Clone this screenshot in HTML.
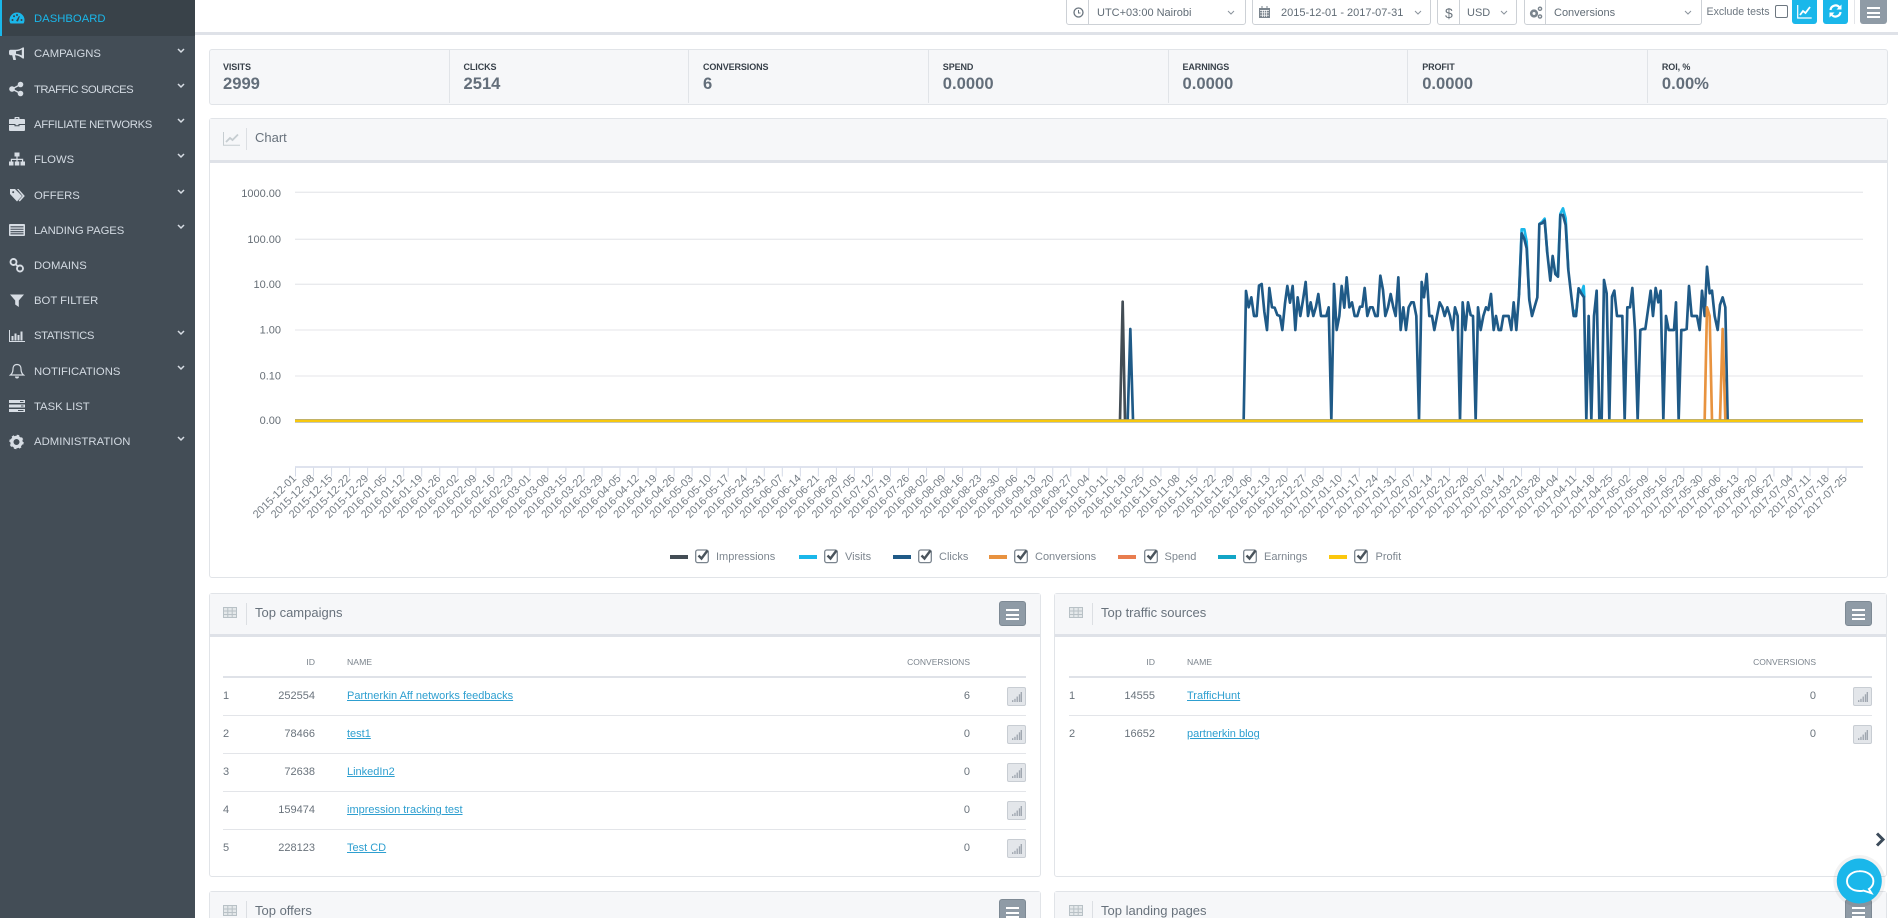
<!DOCTYPE html>
<html><head><meta charset="utf-8"><title>Dashboard</title>
<style>
*{box-sizing:border-box}
html,body{margin:0;padding:0;width:1898px;height:918px;overflow:hidden;background:#fff;font-family:"Liberation Sans",Arial,sans-serif}
#root{position:relative;width:1898px;height:918px;overflow:hidden;background:#fff}
.abs,.side,.si,.pn,.ph,.row,.ctl,.btn{position:absolute}
.side{left:0;top:0;width:195px;height:918px;background:#434d56}
.si{left:0;width:195px;height:35px;color:#d3dae2;font-size:11.3px;line-height:37.5px;padding-left:34px;white-space:nowrap}
.si svg.ic{position:absolute;left:9px;top:10px;width:16px;height:16px;fill:#d7dde4;stroke:none}
.si svg.ch{position:absolute;left:177px;top:12px;width:8px;height:6px;fill:none;stroke:#d7dde4;stroke-width:1.5}
.si.on{background:#394249;color:#1ab7ea;box-shadow:inset 2px 0 0 #1ab7ea;height:36px;line-height:38px}
.si.on svg.ic{fill:#1ab7ea}
.tb{position:absolute;left:195px;top:0;width:1703px;height:35px;background:#fff;border-bottom:3px solid #dfe2e8}
.ctl{top:-1px;height:26px;border:1px solid #cdd1d6;border-radius:0 0 3px 3px;background:#fff;color:#616c76;font-size:11px;line-height:27px}
.ctl i{position:absolute;top:0;bottom:0;width:1px;background:#cdd1d6}
.ctl span{position:absolute;top:0;white-space:nowrap}
.ctl svg{position:absolute}
.btn{top:-1px;height:25px;border-radius:0 0 3px 3px}
.stats{position:absolute;left:209px;top:49px;width:1679px;height:56px;background:#f6f7f9;border:1.5px solid #e1e4e8;border-radius:3px}
.st{position:absolute;top:0;height:53px;border-left:1.5px solid #e1e4e8}
.st b{position:absolute;left:14px;top:11px;font-size:9px;letter-spacing:-.1px;color:#38414a;white-space:nowrap;line-height:12px}
.st strong{position:absolute;left:14px;top:24px;font-size:16.6px;color:#636e7a;line-height:20px;white-space:nowrap}
.pn{background:#fff;border:1.5px solid #e1e4e8;border-radius:3px}
.ph{left:0;right:0;top:0;background:#f6f7f9;border-bottom:3px solid #dfe2e8;color:#68727c;font-size:13px}
.ph span{position:absolute;left:45px;white-space:nowrap}
.ph i{position:absolute;left:36px;width:1px;background:#dcdfe3}
.ph svg.g{position:absolute;left:13px}
.rp .ph span{left:46px}
.rp .ph i{left:37px}
.rp .ph svg.g{left:14px}
.mb{position:absolute;width:27px;height:25px;background:#8f9ba6;border:1px solid #7d8994;border-radius:3px}
.mb u{position:absolute;left:6px;width:13px;height:2px;background:#fff}
.row{height:38px;font-size:11px;color:#6a737c;line-height:37px;border-bottom:1px solid #e3e5e9;width:803px}
.row.last{border-bottom:none}
.row span{position:absolute;top:0;white-space:nowrap}
.row .id{right:711px;text-align:right}
.r2 .id{right:717px}
.row a{position:absolute;left:124px;color:#2e9fd0;text-decoration:underline;top:0}
.r2 a{left:118px}
.row .c{right:56px}
.row .b{position:absolute;left:784px;top:9px;width:19px;height:19px;background:#e3e6ea;border:1px solid #c8cdd3;border-radius:2px}
.row .b svg{position:absolute;left:4px;top:4px;width:10px;height:10px;fill:#a0a7b0}
.th{position:absolute;height:33px;width:803px;border-bottom:2px solid #dfe2e8;font-size:8.7px;color:#7b848d;line-height:35px}
.th span{position:absolute;top:0;white-space:nowrap}
svg.chart{position:absolute;left:0;top:0;width:1898px;height:918px}
.yl text{font-size:11px;fill:#666e76;text-anchor:end}
.xl text{font-size:11px;fill:#777f87;text-anchor:end}
.lg text{font-size:11px;fill:#7d868f}
</style></head><body>
<div id="root">
<svg width="0" height="0" style="position:absolute"><defs>
<g id="grid"><rect x=".5" y=".5" width="13" height="10" fill="#e4e8ea" stroke="#b8c1c6"/><path d="M.5 4h13M.5 7.500h13M4.800 .5v10M9.200 .5v10" stroke="#b8c1c6" fill="none"/></g>
<g id="cb"><rect x=".7" y="2" width="12.600" height="12.600" rx="2" fill="#fff" stroke="#7a848e" stroke-width="1.300"/><path d="M3.500 7.500l3 3 6-8" fill="none" stroke="#4a545c" stroke-width="2.400"/></g>
<g id="bars"><rect x="0" y="9" width="1.500" height="2"/><rect x="2.500" y="7.500" width="1.500" height="3.500"/><rect x="5" y="5" width="1.500" height="6"/><rect x="7.500" y="2.500" width="1.500" height="8.500"/><rect x="9.500" y="0" width="1.500" height="11"/></g>
<path id="chv" d="M1 1l3 3 3-3"/>
</defs></svg>

<div class="side">
<div class="si on" style="top:0"><svg class="ic" viewBox="0 0 16 16"><path d="M8 2.500A7.500 7.500 0 0 0 .5 10c0 1.500.4 2.800 1 3.500h13c.6-.7 1-2 1-3.500A7.500 7.500 0 0 0 8 2.500z"/><g fill="#394249"><circle cx="3.500" cy="10" r="1"/><circle cx="5" cy="6.300" r="1"/><circle cx="8" cy="5" r="1"/><circle cx="12.500" cy="10" r="1"/><path d="M7 11l3-5 .8.400L9 11.500z"/></g></svg>DASHBOARD</div>
<div class="si" style="top:36px"><svg class="ic" viewBox="0 0 16 16"><path d="M15 1.500v11h-1.300C11.500 10.500 9 9.400 6.500 9.200H6l1 4.300-.5.500H4.300L3.200 9.200H1.500C.7 9.200 0 8.500 0 7.500v-2c0-1 .7-1.700 1.500-1.700h5C9 3.800 11.500 3 13.700 1.500z"/><path d="M12.800 3.500C11 4.500 8.800 5.200 7 5.300v2.400c1.800.2 4 .8 5.800 1.800z" fill="#434d56"/></svg>CAMPAIGNS<svg class="ch" viewBox="0 0 8 6"><use href="#chv"/></svg></div>
<div class="si" style="top:71px;line-height:38.5px;letter-spacing:-.5px"><svg class="ic" viewBox="0 0 16 16"><circle cx="3" cy="8" r="2.800"/><circle cx="11.500" cy="3.500" r="2.800"/><circle cx="11.500" cy="12.500" r="2.800"/><path d="M3 8l8.500-4.500M3 8l8.500 4.500" stroke="#d7dde4" stroke-width="1.400"/></svg>TRAFFIC SOURCES<svg class="ch" viewBox="0 0 8 6"><use href="#chv"/></svg></div>
<div class="si" style="top:106px;line-height:38.5px;letter-spacing:-.3px"><svg class="ic" viewBox="0 0 16 16"><path d="M5.500 3V1.800c0-.5.4-.8.800-.8h3.400c.4 0 .8.300.8.800V3H15c.6 0 1 .4 1 1v4H9.500v1.300h-3V8H0V4c0-.6.4-1 1-1zM6.800 3h2.400V2.300H6.800zM0 9h5.500v1.300h5V9H16v5c0 .6-.4 1-1 1H1c-.6 0-1-.4-1-1z"/></svg>AFFILIATE NETWORKS<svg class="ch" viewBox="0 0 8 6"><use href="#chv"/></svg></div>
<div class="si" style="top:141px;line-height:38px"><svg class="ic" viewBox="0 0 16 16"><rect x="5.500" y="1.500" width="5" height="4"/><rect x="0" y="10.500" width="4.500" height="4"/><rect x="5.800" y="10.500" width="4.500" height="4"/><rect x="11.500" y="10.500" width="4.500" height="4"/><path d="M7.400 5.500h1.200v2.300h5.600v2.700H13V9H8.600v1.500H7.400V9H3v1.500H1.800V7.800h5.600z"/></svg>FLOWS<svg class="ch" viewBox="0 0 8 6"><use href="#chv"/></svg></div>
<div class="si" style="top:177px;line-height:38px"><svg class="ic" viewBox="0 0 16 16"><path d="M1 2h5l7 7-5 5.500-7-7.500zM3.200 5.200a1 1 0 1 0 0-.1z"/><path d="M8 2h1.500l6.300 7-5 5.500-1.200-1 4-4.500z"/></svg>OFFERS<svg class="ch" viewBox="0 0 8 6"><use href="#chv"/></svg></div>
<div class="si" style="top:212px;line-height:38.5px;letter-spacing:-.1px"><svg class="ic" viewBox="0 0 16 16"><path d="M1 2h14c.6 0 1 .4 1 1v10c0 .6-.4 1-1 1H1c-.6 0-1-.4-1-1V3c0-.6.4-1 1-1z"/><path d="M1.500 4.300h13v1.100h-13zM1.500 6.700h13v1.100h-13zM1.500 9.100h13v1.100h-13zM1.500 11.300h13v1.100h-13z" fill="#434d56"/></svg>LANDING PAGES<svg class="ch" viewBox="0 0 8 6"><use href="#chv"/></svg></div>
<div class="si" style="top:247px;line-height:38.5px"><svg class="ic" viewBox="0 0 16 16"><g fill="none" stroke="#d7dde4" stroke-width="1.900"><circle cx="4.500" cy="5" r="3"/><circle cx="11" cy="11.500" r="3"/><path d="M6.500 7l3 3"/></g></svg>DOMAINS</div>
<div class="si" style="top:282px;line-height:38.5px"><svg class="ic" viewBox="0 0 16 16"><path d="M1 2.500h14L9.800 8.500V15L6.200 12.500V8.500z"/></svg>BOT FILTER</div>
<div class="si" style="top:318px;letter-spacing:-.35px"><svg class="ic" viewBox="0 0 16 16"><path d="M0 2h1v11h15v1H0zM2.500 8h2v4.500h-2zM5.500 5.500h2v7h-2zM8.500 7h2v5.500h-2zM11.500 3.500h2v9h-2z"/></svg>STATISTICS<svg class="ch" viewBox="0 0 8 6"><use href="#chv"/></svg></div>
<div class="si" style="top:353px;line-height:38.5px"><svg class="ic" viewBox="0 0 16 16"><path d="M8 1.500c2.700 0 4 2 4 4.500 0 3 1 4.800 2.500 6h-13C3 10.800 4 9 4 6c0-2.500 1.300-4.500 4-4.500z" fill="none" stroke="#d7dde4" stroke-width="1.200"/><path d="M6 13.500a2 2 0 0 0 4 0z"/></svg>NOTIFICATIONS<svg class="ch" viewBox="0 0 8 6"><use href="#chv"/></svg></div>
<div class="si" style="top:388px;line-height:38.500px"><svg class="ic" viewBox="0 0 16 16"><rect x="0" y="2" width="16" height="3"/><rect x="0" y="6.500" width="16" height="3"/><rect x="0" y="11" width="16" height="3"/><rect x="11" y="3" width="3.500" height="1" fill="#434d56"/><rect x="12" y="7.500" width="2.500" height="1" fill="#434d56"/><rect x="9" y="12" width="5.500" height="1" fill="#434d56"/></svg>TASK LIST</div>
<div class="si" style="top:424px;line-height:36.5px;letter-spacing:.05px"><svg class="ic" viewBox="0 0 16 16"><circle cx="7.500" cy="8" r="4.600" fill="none" stroke="#d7dde4" stroke-width="3.200"/><circle cx="7.500" cy="8" r="6.200" fill="none" stroke="#d7dde4" stroke-width="2" stroke-dasharray="2.400 2.470"/></svg>ADMINISTRATION<svg class="ch" viewBox="0 0 8 6"><use href="#chv"/></svg></div>
</div>

<div class="tb"></div>
<div class="ctl" style="left:1066px;width:180px"><i style="left:21px"></i><svg style="left:6px;top:7px" width="11" height="11" viewBox="0 0 11 11"><circle cx="5.500" cy="5.500" r="4.500" fill="none" stroke="#69747e" stroke-width="1.300"/><path d="M5.500 3v3h2" fill="none" stroke="#69747e"/></svg><span style="left:30px">UTC+03:00 Nairobi</span><svg style="left:160px;top:10px" width="8" height="6" viewBox="0 0 8 6" fill="none" stroke="#8a939c"><use href="#chv"/></svg></div>
<div class="ctl" style="left:1252px;width:179px"><svg style="left:6px;top:6px" width="11" height="12" viewBox="0 0 11 12"><path d="M0 2h11v10H0z" fill="#7b858e"/><path d="M1 4.500h9M1 6.800h9M1 9.200h9M3.500 4v7M5.500 4v7M7.500 4v7" stroke="#fff" stroke-width=".7"/><path d="M2.500 0h1v3h-1zM7.500 0h1v3h-1z" fill="#7b858e"/></svg><span style="left:28px">2015-12-01 - 2017-07-31</span><svg style="left:161px;top:10px" width="8" height="6" viewBox="0 0 8 6" fill="none" stroke="#8a939c"><use href="#chv"/></svg></div>
<div class="ctl" style="left:1437px;width:80px"><i style="left:21px"></i><span style="left:7px;font-size:14px;color:#6a747d">$</span><span style="left:29px">USD</span><svg style="left:62px;top:10px" width="8" height="6" viewBox="0 0 8 6" fill="none" stroke="#8a939c"><use href="#chv"/></svg></div>
<div class="ctl" style="left:1524px;width:178px"><i style="left:20px"></i><svg style="left:4px;top:6px" width="14" height="13" viewBox="0 0 14 13"><circle cx="5" cy="7.500" r="2.800" fill="none" stroke="#7b858e" stroke-width="2.600"/><circle cx="11" cy="2.800" r="1.600" fill="none" stroke="#7b858e" stroke-width="1.400"/><circle cx="11" cy="10.500" r="1.600" fill="none" stroke="#7b858e" stroke-width="1.400"/></svg><span style="left:29px">Conversions</span><svg style="left:159px;top:10px" width="8" height="6" viewBox="0 0 8 6" fill="none" stroke="#8a939c"><use href="#chv"/></svg></div>
<div class="abs" style="left:1706.500px;top:6px;font-size:10.600px;color:#6d7780;white-space:nowrap;line-height:12px">Exclude tests</div>
<div class="abs" style="left:1775px;top:5px;width:13px;height:13px;border:1px solid #6d7780;border-radius:2px;background:#fff"></div>
<div class="btn" style="left:1792px;width:25px;background:#1ab7ea"><svg style="position:absolute;left:5px;top:6px" width="15" height="14" viewBox="0 0 15 14" fill="none" stroke="#fff"><path d="M.7 0v13h14" stroke-width="1.200"/><path d="M3 10l3-4 2.500 2 4.500-6" stroke-width="1.800"/></svg></div>
<div class="btn" style="left:1823px;width:25px;background:#1ab7ea"><svg style="position:absolute;left:6px;top:5px" width="13" height="14" viewBox="0 0 13 14" fill="none" stroke="#fff" stroke-width="2.200"><path d="M1.500 6A5 5 0 0 1 10.500 3.500"/><path d="M11.500 8A5 5 0 0 1 2.500 10.500"/><path d="M12.500 .5v5h-5z" fill="#fff" stroke="none"/><path d="M.5 13.500v-5h5z" fill="#fff" stroke="none"/></svg></div>
<div class="abs" style="left:1854px;top:0;width:1px;height:24px;background:#e3e5e9"></div>
<div class="btn" style="left:1860px;width:27px;background:#8f9ba6"><u style="position:absolute;left:7px;top:8px;width:13px;height:2px;background:#fff"></u><u style="position:absolute;left:7px;top:12.500px;width:13px;height:2px;background:#fff"></u><u style="position:absolute;left:7px;top:17px;width:13px;height:2px;background:#fff"></u></div>

<div class="stats">
<div class="st" style="left:-1px;border:0"><b style="left:14px">VISITS</b><strong>2999</strong></div>
<div class="st" style="left:238.500px"><b>CLICKS</b><strong>2514</strong></div>
<div class="st" style="left:478px"><b>CONVERSIONS</b><strong>6</strong></div>
<div class="st" style="left:717.800px"><b>SPEND</b><strong>0.0000</strong></div>
<div class="st" style="left:957.500px"><b>EARNINGS</b><strong>0.0000</strong></div>
<div class="st" style="left:1197.200px"><b>PROFIT</b><strong>0.0000</strong></div>
<div class="st" style="left:1436.900px"><b>ROI, %</b><strong>0.00%</strong></div>
</div>

<!-- chart panel -->
<div class="pn" style="left:209px;top:118px;width:1679px;height:460px"><div class="ph" style="height:44px;line-height:38px"><svg class="g" style="top:13px" width="17" height="14" viewBox="0 0 17 14"><path d="M.5 0v13.300H17" fill="none" stroke="#c6cdd1"/><path d="M3 10l4-4 2.500 2L15 2.500" fill="none" stroke="#c6cdd1" stroke-width="1.800"/></svg><i style="top:9px;height:22px"></i><span>Chart</span></div></div>

<!-- top campaigns -->
<div class="pn" style="left:209px;top:593px;width:832px;height:284px"><div class="ph" style="height:43px;line-height:37px"><svg class="g" style="top:13px" width="14" height="11" viewBox="0 0 14 11"><use href="#grid"/></svg><i style="top:9px;height:22px"></i><span>Top campaigns</span></div></div>
<div class="mb" style="left:999px;top:601px"><u style="top:7px"></u><u style="top:11.500px"></u><u style="top:15.500px"></u></div>
<div class="th" style="left:223px;top:645px"><span style="right:711px">ID</span><span style="left:124px">NAME</span><span style="right:56px;font-size:8.500px">CONVERSIONS</span></div>
<div class="row" style="left:223px;top:678px"><span>1</span><span class="id">252554</span><a>Partnerkin Aff networks feedbacks</a><span class="c">6</span><div class="b"><svg viewBox="0 0 11 11"><use href="#bars"/></svg></div></div>
<div class="row" style="left:223px;top:716px"><span>2</span><span class="id">78466</span><a>test1</a><span class="c">0</span><div class="b"><svg viewBox="0 0 11 11"><use href="#bars"/></svg></div></div>
<div class="row" style="left:223px;top:754px"><span>3</span><span class="id">72638</span><a>LinkedIn2</a><span class="c">0</span><div class="b"><svg viewBox="0 0 11 11"><use href="#bars"/></svg></div></div>
<div class="row" style="left:223px;top:792px"><span>4</span><span class="id">159474</span><a>impression tracking test</a><span class="c">0</span><div class="b"><svg viewBox="0 0 11 11"><use href="#bars"/></svg></div></div>
<div class="row last" style="left:223px;top:830px"><span>5</span><span class="id">228123</span><a>Test CD</a><span class="c">0</span><div class="b"><svg viewBox="0 0 11 11"><use href="#bars"/></svg></div></div>

<!-- top traffic sources -->
<div class="pn rp" style="left:1054px;top:593px;width:833px;height:284px"><div class="ph" style="height:43px;line-height:37px"><svg class="g" style="top:13px" width="14" height="11" viewBox="0 0 14 11"><use href="#grid"/></svg><i style="top:9px;height:22px"></i><span>Top traffic sources</span></div></div>
<div class="mb" style="left:1845px;top:601px"><u style="top:7px"></u><u style="top:11.500px"></u><u style="top:15.500px"></u></div>
<div class="th r2" style="left:1069px;top:645px"><span style="right:717px">ID</span><span style="left:118px">NAME</span><span style="right:56px;font-size:8.500px">CONVERSIONS</span></div>
<div class="row r2" style="left:1069px;top:678px"><span>1</span><span class="id">14555</span><a>TrafficHunt</a><span class="c">0</span><div class="b"><svg viewBox="0 0 11 11"><use href="#bars"/></svg></div></div>
<div class="row r2 last" style="left:1069px;top:716px"><span>2</span><span class="id">16652</span><a>partnerkin blog</a><span class="c">0</span><div class="b"><svg viewBox="0 0 11 11"><use href="#bars"/></svg></div></div>

<!-- bottom panels -->
<div class="pn" style="left:209px;top:891px;width:832px;height:60px"><div class="ph" style="height:43px;line-height:37px"><svg class="g" style="top:13px" width="14" height="11" viewBox="0 0 14 11"><use href="#grid"/></svg><i style="top:9px;height:22px"></i><span>Top offers</span></div></div>
<div class="mb" style="left:999px;top:899px"><u style="top:7px"></u><u style="top:11.500px"></u><u style="top:15.500px"></u></div>
<div class="pn rp" style="left:1054px;top:891px;width:833px;height:60px"><div class="ph" style="height:43px;line-height:37px"><svg class="g" style="top:13px" width="14" height="11" viewBox="0 0 14 11"><use href="#grid"/></svg><i style="top:9px;height:22px"></i><span>Top landing pages</span></div></div>
<div class="mb" style="left:1845px;top:899px"><u style="top:7px"></u><u style="top:11.500px"></u><u style="top:15.500px"></u></div>

<svg class="chart" viewBox="0 0 1898 918">
<g stroke="#e9eaed" stroke-width="1.300">
<path d="M295 192.300H1863M295 239.300H1863M295 284.300H1863M295 330H1863M295 376H1863"/>
</g>
<g class="yl">
<text x="281" y="197">1000.00</text><text x="281" y="243">100.00</text><text x="281" y="288">10.00</text><text x="281" y="333.500">1.00</text><text x="281" y="379.500">0.10</text><text x="281" y="424">0.00</text>
</g>
<path d="M295 467H1863" stroke="#dfe3ee" stroke-width="2"/>
<path d="M295 472H1850" stroke="#d5dbe8" stroke-width="9" stroke-dasharray="1 17.030"/>
<g transform="translate(1080 190) scale(.33333)" fill="none" stroke-linejoin="round" stroke-width="8">
<path stroke="#434d55" d="M120 690L128 335L135 690"/>
<path stroke="#1ab7ea" d="M1317 315L1325 118L1333 118L1340 155L1348 330M1378 102L1386 96L1394 86L1402 190M1433 260L1441 72L1449 55L1457 85L1465 240M1481 360L1488 378L1496 295L1504 310L1511 288L1513 322"/>
<path stroke="#1f5a87" d="M143 690L151 417L159 690"/>
<path stroke="#1f5a87" d="M491 690L498 303L506 352L514 322L522 378L530 378L537 287L545 282L553 365L561 420L568 294L576 352L584 353L592 375L600 378L607 420L615 340L622 288L630 338L638 288L646 420L653 322L661 378L669 330L677 276L684 378L692 337L700 378L708 350L715 312L723 378L731 378L739 378L746 352L754 690L762 282L770 420L778 378L785 288L793 353L800 262L808 352L816 337L824 378L832 378L840 350L847 350L854 294L862 378L870 352L878 352L886 378L893 378L901 257L909 300L916 378L924 352L932 312L940 352L947 378L955 262L962 420L970 352L978 420L986 352L994 337L1001 337L1009 378L1017 690L1025 276L1032 322L1040 252L1048 378L1056 378L1063 420L1071 378L1079 337L1087 352L1094 378L1102 352L1110 378L1118 420L1125 352L1133 378L1140 690L1148 337L1156 420L1164 337L1172 375L1179 378L1187 690L1194 352L1202 420L1210 378L1218 352L1225 360L1233 312L1241 420L1248 378L1256 420L1263 420L1270 378L1278 378L1286 378L1294 420L1301 337L1309 420L1317 315L1325 130L1333 147L1340 175L1348 330L1356 378L1364 350L1372 322L1378 102L1386 100L1394 92L1402 190L1411 272L1418 198L1426 252L1434 260L1441 75L1449 75L1457 105L1465 240L1473 310L1481 378L1488 378L1496 295L1504 310L1512 322L1519 690L1526 378L1534 690L1542 378L1550 302L1558 690L1565 690L1572 270L1580 310L1588 690L1596 320L1603 302L1611 378L1619 378L1627 378L1634 690L1642 352L1650 352L1657 294L1665 420L1673 690L1681 420L1689 417L1696 417L1704 360L1712 302L1719 378L1727 294L1735 337L1742 302L1750 690L1758 378L1766 420L1774 420L1782 420L1788 337L1796 690L1804 420L1812 420L1820 417L1827 288L1835 378L1843 378L1851 378L1859 420L1866 302L1874 378L1881 230L1889 310L1896 302L1904 378L1913 420L1920 345L1928 322L1936 352L1943 690"/>
<path stroke="#e8933f" d="M1874 690L1881 352L1889 378L1896 690M1920 690L1928 417L1936 690"/>
</g>
<path d="M295 420.800H1863" stroke="#8a8f80" stroke-width="3.400"/>
<path d="M295 420.800H1863" stroke="#f7c80f" stroke-width="2.400"/>
<g class="xl">
<text transform="translate(297 479)rotate(-45)">2015-12-01</text>
<text transform="translate(315 479)rotate(-45)">2015-12-08</text>
<text transform="translate(333.100 479)rotate(-45)">2015-12-15</text>
<text transform="translate(351.100 479)rotate(-45)">2015-12-22</text>
<text transform="translate(369.100 479)rotate(-45)">2015-12-29</text>
<text transform="translate(387.200 479)rotate(-45)">2016-01-05</text>
<text transform="translate(405.200 479)rotate(-45)">2016-01-12</text>
<text transform="translate(423.200 479)rotate(-45)">2016-01-19</text>
<text transform="translate(441.200 479)rotate(-45)">2016-01-26</text>
<text transform="translate(459.300 479)rotate(-45)">2016-02-02</text>
<text transform="translate(477.300 479)rotate(-45)">2016-02-09</text>
<text transform="translate(495.300 479)rotate(-45)">2016-02-16</text>
<text transform="translate(513.400 479)rotate(-45)">2016-02-23</text>
<text transform="translate(531.400 479)rotate(-45)">2016-03-01</text>
<text transform="translate(549.400 479)rotate(-45)">2016-03-08</text>
<text transform="translate(567.500 479)rotate(-45)">2016-03-15</text>
<text transform="translate(585.500 479)rotate(-45)">2016-03-22</text>
<text transform="translate(603.500 479)rotate(-45)">2016-03-29</text>
<text transform="translate(621.500 479)rotate(-45)">2016-04-05</text>
<text transform="translate(639.600 479)rotate(-45)">2016-04-12</text>
<text transform="translate(657.600 479)rotate(-45)">2016-04-19</text>
<text transform="translate(675.600 479)rotate(-45)">2016-04-26</text>
<text transform="translate(693.700 479)rotate(-45)">2016-05-03</text>
<text transform="translate(711.700 479)rotate(-45)">2016-05-10</text>
<text transform="translate(729.700 479)rotate(-45)">2016-05-17</text>
<text transform="translate(747.800 479)rotate(-45)">2016-05-24</text>
<text transform="translate(765.800 479)rotate(-45)">2016-05-31</text>
<text transform="translate(783.800 479)rotate(-45)">2016-06-07</text>
<text transform="translate(801.800 479)rotate(-45)">2016-06-14</text>
<text transform="translate(819.900 479)rotate(-45)">2016-06-21</text>
<text transform="translate(837.900 479)rotate(-45)">2016-06-28</text>
<text transform="translate(855.900 479)rotate(-45)">2016-07-05</text>
<text transform="translate(874 479)rotate(-45)">2016-07-12</text>
<text transform="translate(892 479)rotate(-45)">2016-07-19</text>
<text transform="translate(910 479)rotate(-45)">2016-07-26</text>
<text transform="translate(928.100 479)rotate(-45)">2016-08-02</text>
<text transform="translate(946.100 479)rotate(-45)">2016-08-09</text>
<text transform="translate(964.100 479)rotate(-45)">2016-08-16</text>
<text transform="translate(982.100 479)rotate(-45)">2016-08-23</text>
<text transform="translate(1000.200 479)rotate(-45)">2016-08-30</text>
<text transform="translate(1018.200 479)rotate(-45)">2016-09-06</text>
<text transform="translate(1036.200 479)rotate(-45)">2016-09-13</text>
<text transform="translate(1054.300 479)rotate(-45)">2016-09-20</text>
<text transform="translate(1072.300 479)rotate(-45)">2016-09-27</text>
<text transform="translate(1090.300 479)rotate(-45)">2016-10-04</text>
<text transform="translate(1108.400 479)rotate(-45)">2016-10-11</text>
<text transform="translate(1126.400 479)rotate(-45)">2016-10-18</text>
<text transform="translate(1144.400 479)rotate(-45)">2016-10-25</text>
<text transform="translate(1162.400 479)rotate(-45)">2016-11-01</text>
<text transform="translate(1180.500 479)rotate(-45)">2016-11-08</text>
<text transform="translate(1198.500 479)rotate(-45)">2016-11-15</text>
<text transform="translate(1216.500 479)rotate(-45)">2016-11-22</text>
<text transform="translate(1234.600 479)rotate(-45)">2016-11-29</text>
<text transform="translate(1252.600 479)rotate(-45)">2016-12-06</text>
<text transform="translate(1270.600 479)rotate(-45)">2016-12-13</text>
<text transform="translate(1288.700 479)rotate(-45)">2016-12-20</text>
<text transform="translate(1306.700 479)rotate(-45)">2016-12-27</text>
<text transform="translate(1324.700 479)rotate(-45)">2017-01-03</text>
<text transform="translate(1342.700 479)rotate(-45)">2017-01-10</text>
<text transform="translate(1360.800 479)rotate(-45)">2017-01-17</text>
<text transform="translate(1378.800 479)rotate(-45)">2017-01-24</text>
<text transform="translate(1396.800 479)rotate(-45)">2017-01-31</text>
<text transform="translate(1414.900 479)rotate(-45)">2017-02-07</text>
<text transform="translate(1432.900 479)rotate(-45)">2017-02-14</text>
<text transform="translate(1450.900 479)rotate(-45)">2017-02-21</text>
<text transform="translate(1469 479)rotate(-45)">2017-02-28</text>
<text transform="translate(1487 479)rotate(-45)">2017-03-07</text>
<text transform="translate(1505 479)rotate(-45)">2017-03-14</text>
<text transform="translate(1523 479)rotate(-45)">2017-03-21</text>
<text transform="translate(1541.100 479)rotate(-45)">2017-03-28</text>
<text transform="translate(1559.100 479)rotate(-45)">2017-04-04</text>
<text transform="translate(1577.100 479)rotate(-45)">2017-04-11</text>
<text transform="translate(1595.200 479)rotate(-45)">2017-04-18</text>
<text transform="translate(1613.200 479)rotate(-45)">2017-04-25</text>
<text transform="translate(1631.200 479)rotate(-45)">2017-05-02</text>
<text transform="translate(1649.300 479)rotate(-45)">2017-05-09</text>
<text transform="translate(1667.300 479)rotate(-45)">2017-05-16</text>
<text transform="translate(1685.300 479)rotate(-45)">2017-05-23</text>
<text transform="translate(1703.300 479)rotate(-45)">2017-05-30</text>
<text transform="translate(1721.400 479)rotate(-45)">2017-06-06</text>
<text transform="translate(1739.400 479)rotate(-45)">2017-06-13</text>
<text transform="translate(1757.400 479)rotate(-45)">2017-06-20</text>
<text transform="translate(1775.500 479)rotate(-45)">2017-06-27</text>
<text transform="translate(1793.500 479)rotate(-45)">2017-07-04</text>
<text transform="translate(1811.500 479)rotate(-45)">2017-07-11</text>
<text transform="translate(1829.600 479)rotate(-45)">2017-07-18</text>
<text transform="translate(1847.600 479)rotate(-45)">2017-07-25</text>
</g>
<g class="lg">
<rect x="670" y="555" width="18" height="4" fill="#434d55"/><use href="#cb" x="695" y="548"/><text x="716" y="560">Impressions</text>
<rect x="799" y="555" width="18" height="4" fill="#1ab7ea"/><use href="#cb" x="824" y="548"/><text x="845" y="560">Visits</text>
<rect x="893" y="555" width="18" height="4" fill="#1f5a87"/><use href="#cb" x="918" y="548"/><text x="939" y="560">Clicks</text>
<rect x="989" y="555" width="18" height="4" fill="#e8923f"/><use href="#cb" x="1014" y="548"/><text x="1035" y="560">Conversions</text>
<rect x="1118" y="555" width="18" height="4" fill="#e87d4f"/><use href="#cb" x="1144" y="548"/><text x="1164.500" y="560">Spend</text>
<rect x="1218" y="555" width="18" height="4" fill="#12a5c6"/><use href="#cb" x="1243" y="548"/><text x="1264" y="560">Earnings</text>
<rect x="1329" y="555" width="18" height="4" fill="#fbc70d"/><use href="#cb" x="1354" y="548"/><text x="1375.500" y="560">Profit</text>
</g>
<path d="M1877 833.500l6 6-6 6" fill="none" stroke="#3c4b5a" stroke-width="3"/>
<circle cx="1859.300" cy="881" r="26" fill="#000" opacity=".05"/>
<circle cx="1859.300" cy="881" r="22.500" fill="#1ab7ea"/>
<path d="M1860 871.200c-7.500 0-13 4.300-13 10s5.500 9.800 13 9.800c1.300 0 2.500-.1 3.500-.4l8 2.600-2.600-4.200c2.700-1.800 4.500-4.600 4.500-7.800 0-5.700-5.900-10-13.400-10z" fill="none" stroke="#fff" stroke-width="1.900"/>
</svg>
</div>
</body></html>
